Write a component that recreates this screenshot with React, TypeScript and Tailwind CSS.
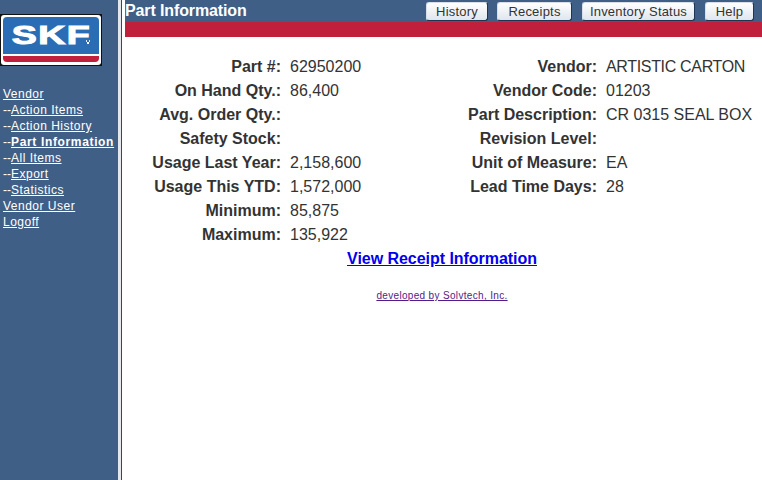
// Part information page with sidebar navigation
const font = "font-['Liberation_Sans',Arial,sans-serif]"

const navLinks = [
  { label: 'Vendor' },
  { label: 'Action Items', nested: true },
  { label: 'Action History', nested: true },
  { label: 'Part Information', nested: true, active: true },
  { label: 'All Items', nested: true },
  { label: 'Export', nested: true },
  { label: 'Statistics', nested: true },
  { label: 'Vendor User' },
  { label: 'Logoff' },
]

const leftRows = [
  ['Part #:', '62950200'],
  ['On Hand Qty.:', '86,400'],
  ['Avg. Order Qty.:', ''],
  ['Safety Stock:', ''],
  ['Usage Last Year:', '2,158,600'],
  ['Usage This YTD:', '1,572,000'],
  ['Minimum:', '85,875'],
  ['Maximum:', '135,922'],
]

const rightRows = [
  ['Vendor:', 'ARTISTIC CARTON'],
  ['Vendor Code:', '01203'],
  ['Part Description:', 'CR 0315 SEAL BOX'],
  ['Revision Level:', ''],
  ['Unit of Measure:', 'EA'],
  ['Lead Time Days:', '28'],
]

function SkfLogo() {
  return (
    <div className="w-[102px] h-[52px] bg-[#111] p-px">
      <div className="h-full bg-white p-[2px] flex flex-col rounded-[3px]">
        <div className="relative h-[37px] bg-[#2a6db5] rounded-t-[4px] flex items-center justify-center overflow-hidden">
          <span className={`${font} text-white font-bold text-[25px] leading-none tracking-[1px] scale-x-[1.5] [-webkit-text-stroke:1px_white]`}>SKF</span>
          <svg className="absolute left-[83px] top-[23px]" width="6" height="5" viewBox="0 0 6 5">
            <rect x="0" y="0" width="1" height="2" fill="#dbe7f3" />
            <rect x="3" y="0" width="1" height="2" fill="#dbe7f3" />
            <rect x="1" y="2" width="2" height="2" fill="#ffffff" />
          </svg>
        </div>
        <div className="h-[2px]" />
        <div className="h-[6px] bg-[#c0203c] rounded-b-[4px]" />
      </div>
    </div>
  )
}

function InfoColumn({ rows, labelWidth, className }: { rows: string[][]; labelWidth: string; className: string }) {
  return (
    <div className={className}>
      {rows.map(([label, value]) => (
        <div key={label} className="flex h-6 items-center text-base leading-none text-[#333]">
          <div className={`${labelWidth} text-right font-bold text-[#333] shrink-0`}>{label}</div>
          <div className={value === 'ARTISTIC CARTON' ? 'ml-[9px] whitespace-nowrap tracking-[-0.33px]' : 'ml-[9px] whitespace-nowrap'}>{value}</div>
        </div>
      ))}
    </div>
  )
}

function TopButton({ label, width }: { label: string; width: string }) {
  return (
    <button className={`${width} h-[19px] bg-gradient-to-b from-white to-[#dfe6ee] border border-[#d8dfe8] border-r-[#1f3554] border-b-[#1f3554] rounded-[3px] text-[13px] leading-none tracking-[0.2px] text-[#333]`}>
      {label}
    </button>
  )
}

export default function App() {
  return (
    <div className={`${font} flex w-[762px] h-[480px] overflow-hidden bg-white`}>
      <aside className="w-[118px] shrink-0 bg-[#3f5f87] pt-[14px]">
        <SkfLogo />
        <nav className="mt-[20px] flex flex-col text-[12px] leading-4 text-white">
          {navLinks.map((link) => (
            <div key={link.label} className="pl-[3px] whitespace-nowrap">
              {link.nested && '--'}
              <a href="#" className={link.active ? 'underline font-bold tracking-[0.65px]' : 'underline tracking-[0.5px]'}>{link.label}</a>
            </div>
          ))}
        </nav>
      </aside>
      <div className="w-[3px] shrink-0 bg-[#e4e8ee]" />
      <div className="w-px shrink-0 bg-[#444]" />
      <main className="flex-1 pl-[3px] min-w-0">
        <div className="flex h-[22px] items-center justify-between bg-[#3f5f87] pr-[8px]">
          <span className="text-base font-bold text-white leading-none tracking-[-0.12px]">Part Information</span>
          <div className="flex">
            <TopButton label="History" width="w-[62px]" />
            <div className="w-[9px]" />
            <TopButton label="Receipts" width="w-[75px]" />
            <div className="w-[10px]" />
            <TopButton label="Inventory Status" width="w-[113px]" />
            <div className="w-[10px]" />
            <TopButton label="Help" width="w-[49px]" />
          </div>
        </div>
        <div className="h-[15px] bg-[#c0203c]" />
        <div className="flex pt-[18px]">
          <InfoColumn rows={leftRows} labelWidth="w-[156px]" className="w-[316px]" />
          <InfoColumn rows={rightRows} labelWidth="w-[156px]" className="" />
        </div>
        <div className="text-center pr-[3px]">
          <a href="#" className="text-base font-bold underline text-[#0000ee] leading-5 tracking-[-0.04px]">View Receipt Information</a>
        </div>
        <div className="text-center mt-[11px] pr-[3px]">
          <a href="#" className="text-[10px] underline text-[#551a8b] tracking-[0.33px]">developed by Solvtech, Inc.</a>
        </div>
      </main>
    </div>
  )
}
